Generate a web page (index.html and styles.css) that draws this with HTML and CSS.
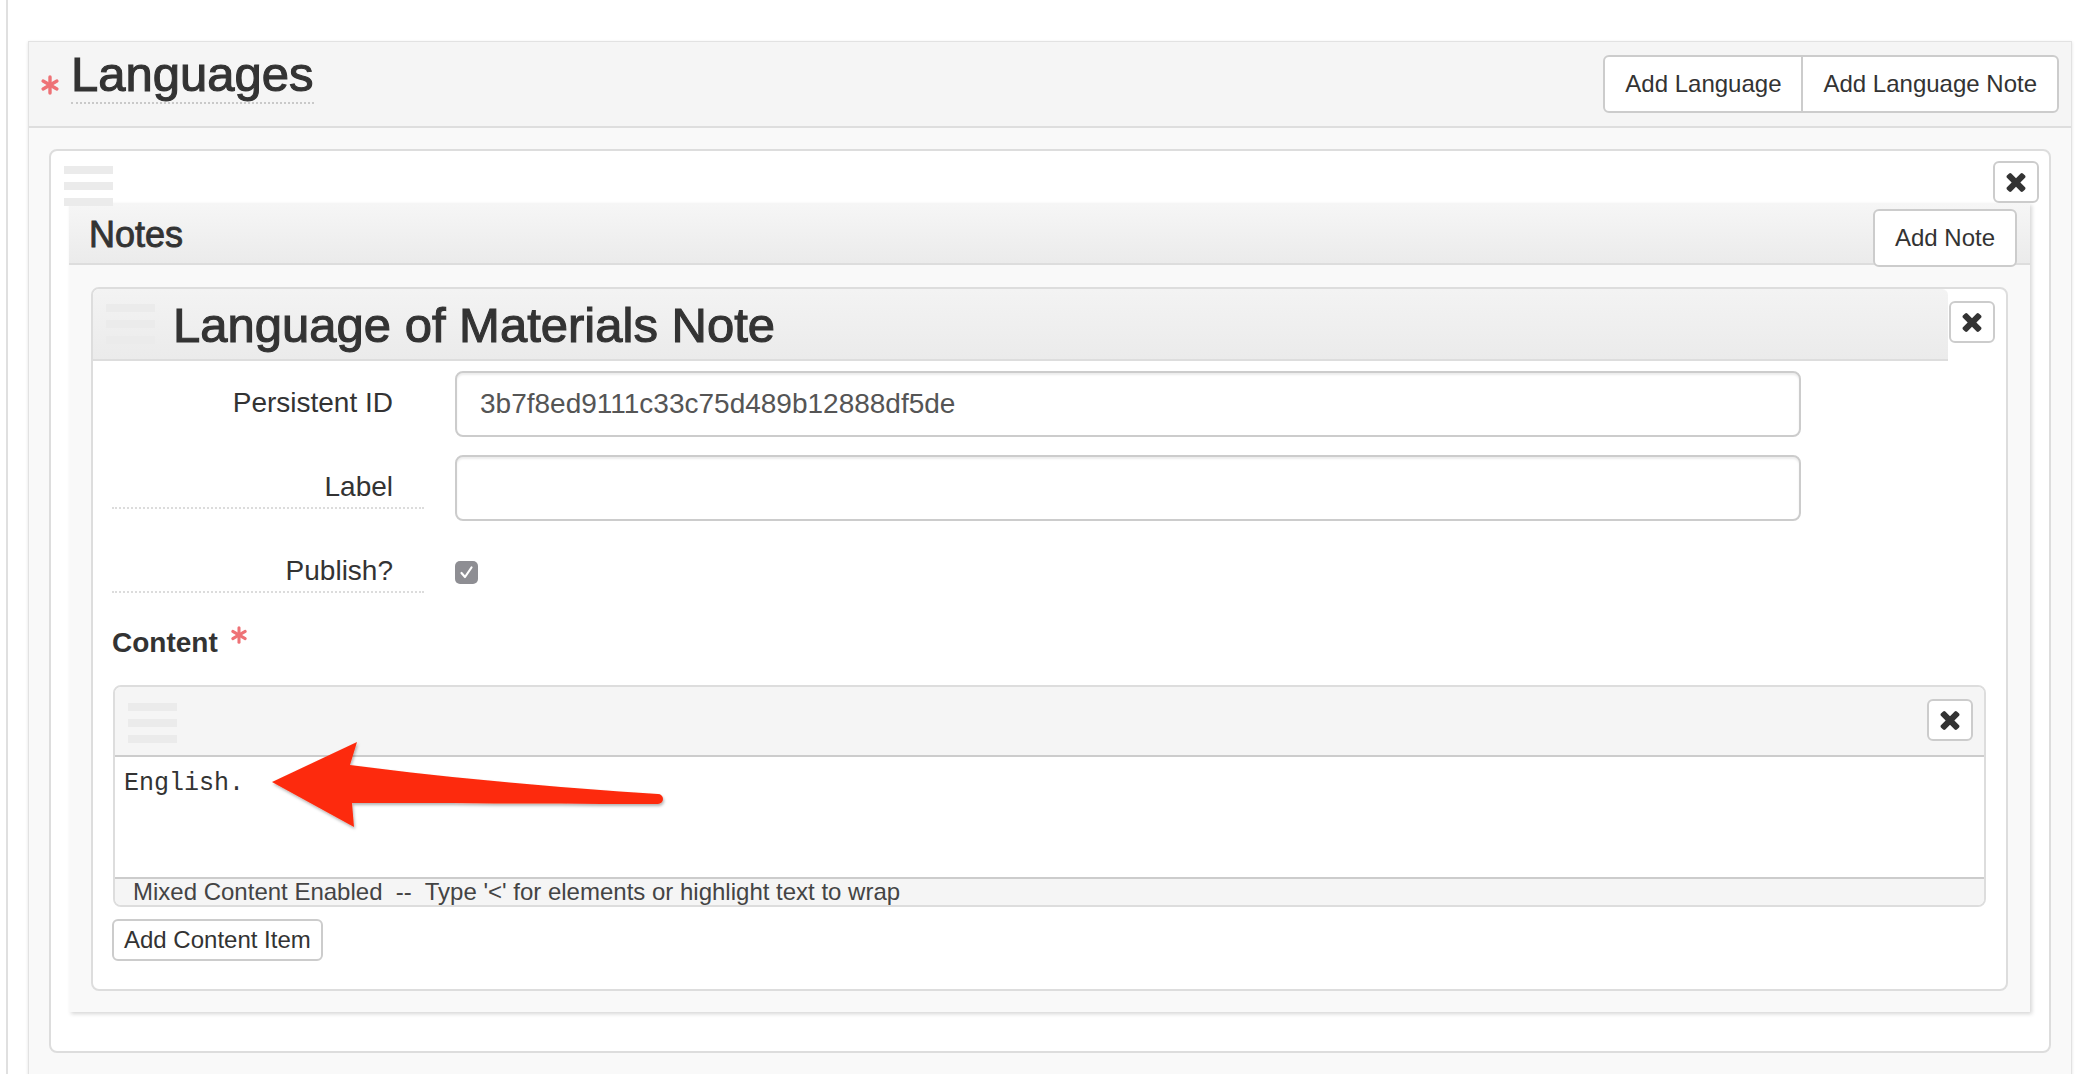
FILE: index.html
```html
<!DOCTYPE html>
<html lang="en">
<head>
<meta charset="utf-8">
<title>Languages</title>
<link rel="stylesheet" href="styles.css">
</head>
<body>
<div class="frame">
  <section class="panel">
    <header class="panel-head">
      <svg class="req" width="20" height="20" viewBox="0 0 20 20"><g stroke="#ee7276" stroke-width="3.4" stroke-linecap="round"><line x1="10" y1="2" x2="10" y2="18"/><line x1="3.1" y1="6" x2="16.9" y2="14"/><line x1="3.1" y1="14" x2="16.9" y2="6"/></g></svg>
      <h2 class="panel-title">Languages</h2>
      <div class="btn-group">
        <button class="btn">Add Language</button><button class="btn">Add Language Note</button>
      </div>
    </header>
    <div class="panel-body">
      <div class="item">
        <div class="item-top">
          <div class="drag"><span></span><span></span><span></span></div>
          <button class="close"><svg width="20" height="19" viewBox="302 366 1188 1188"><path d="M1490 1322q0 40-28 68l-136 136q-28 28-68 28t-68-28l-294-294-294 294q-28 28-68 28t-68-28l-136-136q-28-28-28-68t28-68l294-294-294-294q-28-28-28-68t28-68l136-136q28-28 68-28t68 28l294 294 294-294q28-28 68-28t68 28l136 136q28 28 28 68t-28 68l-294 294 294 294q28 28 28 68z" fill="#333"/></svg></button>
        </div>
        <div class="notes">
          <div class="notes-head">
            <h3 class="notes-title">Notes</h3>
            <button class="btn">Add Note</button>
          </div>
          <div class="notes-body">
            <div class="note">
              <div class="note-top">
                <div class="note-head">
                  <div class="drag"><span></span><span></span><span></span></div>
                  <h2 class="note-title">Language of Materials Note</h2>
                </div>
                <button class="close"><svg width="20" height="19" viewBox="302 366 1188 1188"><path d="M1490 1322q0 40-28 68l-136 136q-28 28-68 28t-68-28l-294-294-294 294q-28 28-68 28t-68-28l-136-136q-28-28-28-68t28-68l294-294-294-294q-28-28-28-68t28-68l136-136q28-28 68-28t68 28l294 294 294-294q28-28 68-28t68 28l136 136q28 28 28 68t-28 68l-294 294 294 294q28 28 28 68z" fill="#333"/></svg></button>
              </div>
              <div class="note-body">
                <div class="row">
                  <div class="label">Persistent ID</div>
                  <div class="input">3b7f8ed9111c33c75d489b12888df5de</div>
                </div>
                <div class="row">
                  <div class="label tip">Label</div>
                  <div class="input"></div>
                </div>
                <div class="row check-row">
                  <div class="label tip">Publish?</div>
                  <div class="checkbox"><svg width="23" height="23" viewBox="0 0 23 23"><polyline points="6.5,12 10,16 16.5,6.5" fill="none" stroke="#fff" stroke-width="2.2" stroke-linecap="round" stroke-linejoin="round"/></svg></div>
                </div>
                <div class="content-label">Content <svg class="req-sm" width="18" height="18" viewBox="0 0 20 20"><g stroke="#ee7276" stroke-width="3.4" stroke-linecap="round"><line x1="10" y1="2" x2="10" y2="18"/><line x1="3.1" y1="6" x2="16.9" y2="14"/><line x1="3.1" y1="14" x2="16.9" y2="6"/></g></svg></div>
                <div class="sub">
                  <div class="sub-head">
                    <div class="drag"><span></span><span></span><span></span></div>
                    <button class="close"><svg width="20" height="19" viewBox="302 366 1188 1188"><path d="M1490 1322q0 40-28 68l-136 136q-28 28-68 28t-68-28l-294-294-294 294q-28 28-68 28t-68-28l-136-136q-28-28-28-68t28-68l294-294-294-294q-28-28-28-68t28-68l136-136q28-28 68-28t68 28l294 294 294-294q28-28 68-28t68 28l136 136q28 28 28 68t-28 68l-294 294 294 294q28 28 28 68z" fill="#333"/></svg></button>
                  </div>
                  <div class="sub-text">English.</div>
                  <div class="sub-status">Mixed Content Enabled  --  Type '&lt;' for elements or highlight text to wrap</div>
                </div>
                <button class="btn btn-sm">Add Content Item</button>
              </div>
            </div>
          </div>
        </div>
      </div>
    </div>
  </section>
</div>
<svg class="arrow" width="2086" height="1074" viewBox="0 0 2086 1074">
  <defs>
    <filter id="sh" x="-10%" y="-30%" width="120%" height="160%">
      <feDropShadow dx="1" dy="2" stdDeviation="1.5" flood-color="#000" flood-opacity="0.3"/>
    </filter>
  </defs>
  <path d="M272 782 L357 742 L350 765 C450 778 560 788 658 794 A5 5 0 0 1 658 804 C560 804 450 803 352 803 L354 827 Z" fill="#fd2b0c" filter="url(#sh)"/>
</svg>
</body>
</html>
```
FILE: styles.css
```css
html, body {
  margin: 0;
  padding: 0;
}
body {
  position: relative;
  width: 2086px;
  height: 1074px;
  overflow: hidden;
  background: #fff;
  color: #333;
  font-family: "Liberation Sans", Arial, Helvetica, sans-serif;
}
.frame {
  margin-left: 6px;
  border-left: 2px solid #e0e0e0;
  padding: 41px 14px 0 20px;
  min-height: 1074px;
  box-sizing: border-box;
}
.panel {
  border: 1px solid #e2e2e2;
  border-bottom: none;
  box-shadow: 0 1px 3px rgba(0,0,0,0.12);
  background: #f9f9f9;
}
.panel-head {
  display: flex;
  align-items: flex-start;
  height: 84px;
  padding: 0 12px 0 11px;
  background: #f5f5f5;
  border-bottom: 2px solid #dedede;
}
.req {
  margin-top: 33px;
  flex: none;
}
.panel-title {
  margin: 8px 0 0 11px;
  font-size: 49px;
  line-height: 49px;
  font-weight: normal;
  padding-bottom: 3px;
  border-bottom: 2px dotted #c9c9c9;
  -webkit-text-stroke: 1.1px #333;
}
.btn-group {
  margin-left: auto;
  margin-top: 13px;
  display: flex;
}
.btn {
  height: 58px;
  padding: 0 20px;
  border: 2px solid #cccccc;
  border-radius: 6px;
  background: #fff;
  color: #333;
  font-family: inherit;
  font-size: 24px;
  line-height: 54px;
  box-sizing: border-box;
  cursor: pointer;
}
.btn-group .btn:first-child {
  border-top-right-radius: 0;
  border-bottom-right-radius: 0;
}
.btn-group .btn + .btn {
  margin-left: -2px;
  border-top-left-radius: 0;
  border-bottom-left-radius: 0;
}
.panel-body {
  padding: 21px 20px 30px 20px;
}
.item {
  border: 2px solid #dddddd;
  border-radius: 8px;
  background: #fff;
  padding-bottom: 39px;
}
.item-top {
  display: flex;
  justify-content: space-between;
  align-items: flex-start;
  height: 52px;
}
.item-top .drag {
  margin: 15px 0 0 13px;
}
.item-top .close {
  margin: 10px 10px 0 0;
}
.drag span {
  display: block;
  width: 49px;
  height: 8px;
  background: #ebebeb;
  margin-bottom: 8px;
}
.drag span:last-child {
  margin-bottom: 0;
}
.close {
  width: 46px;
  height: 42px;
  padding: 0;
  border: 2px solid #cccccc;
  border-radius: 6px;
  background: #fff;
  display: flex;
  align-items: center;
  justify-content: center;
  box-sizing: border-box;
  flex: none;
}
.notes {
  margin: 0 19px 0 18px;
  background: #f9f9f9;
  box-shadow: 2px 2px 4px rgba(0,0,0,0.16);
}
.notes-head {
  display: flex;
  justify-content: space-between;
  align-items: flex-start;
  height: 60px;
  padding: 0 13px 0 20px;
  border-bottom: 2px solid #dddddd;
  background: linear-gradient(#f6f6f6, #ebebeb);
}
.notes-title {
  margin: 14px 0 0;
  font-size: 36px;
  line-height: 36px;
  font-weight: normal;
  -webkit-text-stroke: 0.9px #333;
}
.notes-head .btn {
  margin-top: 6px;
}
.notes-body {
  padding: 22px 22px 21px 22px;
}
.note {
  border: 2px solid #dddddd;
  border-radius: 8px;
  background: #fff;
}
.note-top {
  display: flex;
  align-items: flex-start;
}
.note-head {
  flex: 1;
  height: 70px;
  display: flex;
  align-items: flex-start;
  padding-left: 13px;
  border-bottom: 2px solid #dddddd;
  border-radius: 6px 6px 0 0;
  background: linear-gradient(#f3f3f3, #ebebeb);
}
.note-head .drag {
  margin-top: 15px;
}
.note-title {
  margin: 12px 0 0 18px;
  font-size: 49px;
  line-height: 49px;
  font-weight: normal;
  -webkit-text-stroke: 1.1px #333;
}
.note-top .close {
  margin: 12px 11px 0 1px;
}
.note-body {
  padding: 10px 20px 28px 19px;
}
.row {
  display: flex;
  align-items: center;
}
.row + .row {
  margin-top: 18px;
}
.row.check-row {
  margin-top: 30px;
}
.label {
  width: 312px;
  box-sizing: border-box;
  margin-right: 31px;
  padding-right: 31px;
  text-align: right;
  font-size: 28px;
  line-height: 40px;
  border-bottom: 2px dotted transparent;
}
.label.tip {
  border-bottom-color: #dcdcdc;
}
.input {
  width: 1346px;
  height: 66px;
  box-sizing: border-box;
  padding: 0 23px;
  border: 2px solid #cccccc;
  border-radius: 8px;
  box-shadow: inset 0 2px 2px rgba(0,0,0,0.075);
  font-size: 28px;
  line-height: 62px;
  color: #555;
  background: #fff;
}
.checkbox {
  width: 23px;
  height: 23px;
  border-radius: 5px;
  background: #8e8e93;
}
.checkbox svg {
  display: block;
}
.content-label {
  margin-top: 30px;
  font-size: 28px;
  line-height: 40px;
  font-weight: bold;
}
.req-sm {
  vertical-align: 8px;
  margin-left: 4px;
}
.sub {
  margin: 22px 0 0 1px;
  border: 2px solid #dddddd;
  border-radius: 8px;
  overflow: hidden;
}
.sub-head {
  display: flex;
  justify-content: space-between;
  align-items: flex-start;
  height: 68px;
  border-bottom: 2px solid #cccccc;
  background: #f5f5f5;
}
.sub-head .drag {
  margin: 16px 0 0 13px;
}
.sub-head .close {
  margin: 12px 11px 0 0;
}
.sub-text {
  height: 120px;
  box-sizing: border-box;
  padding: 9px;
  font-family: "Liberation Mono", "Courier New", monospace;
  font-size: 25px;
  line-height: 35px;
  color: #333;
  background: #fff;
}
.sub-status {
  height: 26px;
  border-top: 2px solid #cccccc;
  background: #f5f5f5;
  padding-left: 18px;
  font-size: 24px;
  line-height: 26px;
  color: #444;
  white-space: pre;
}
.btn-sm {
  height: 42px;
  margin-top: 12px;
  padding: 0 10px;
  line-height: 38px;
}
.arrow {
  position: absolute;
  left: 0;
  top: 0;
  pointer-events: none;
}
```
